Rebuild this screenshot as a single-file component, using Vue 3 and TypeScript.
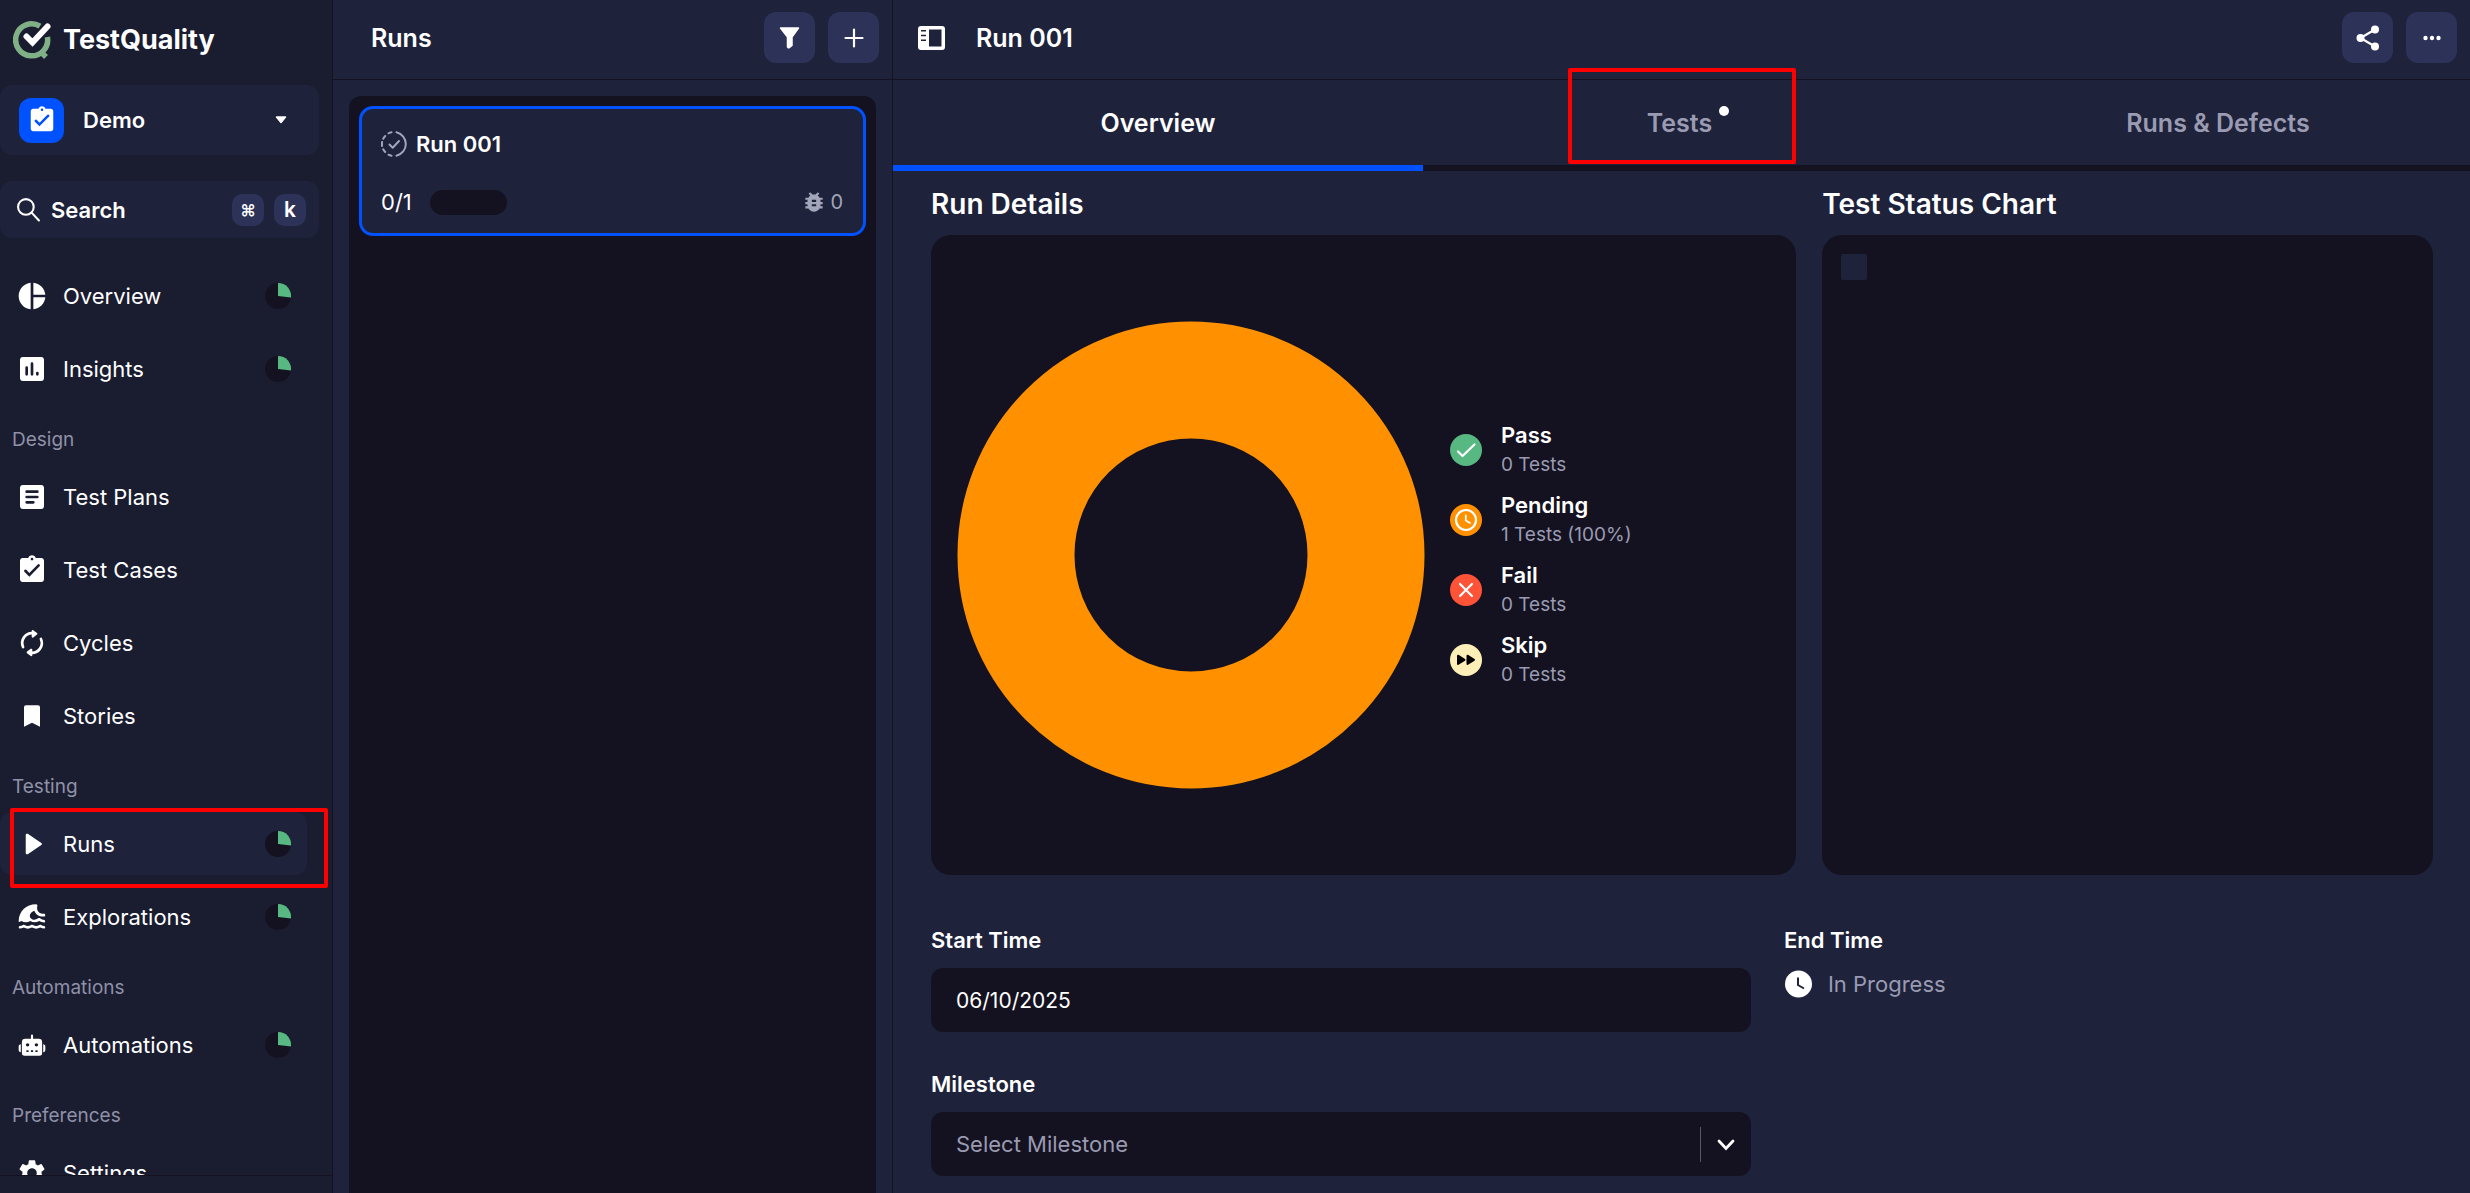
<script setup lang="ts">
import { ref } from 'vue'

interface NavItem {
  label: string
  icon: string
  meter?: boolean
  active?: boolean
}

interface NavGroup {
  title?: string
  items: NavItem[]
}

interface StatusRow {
  key: string
  label: string
  detail: string
}

const groups: NavGroup[] = [
  {
    items: [
      { label: 'Overview', icon: 'pie', meter: true },
      { label: 'Insights', icon: 'chart', meter: true },
    ],
  },
  {
    title: 'Design',
    items: [
      { label: 'Test Plans', icon: 'article' },
      { label: 'Test Cases', icon: 'clipboard' },
      { label: 'Cycles', icon: 'cycle' },
      { label: 'Stories', icon: 'bookmark' },
    ],
  },
  {
    title: 'Testing',
    items: [
      { label: 'Runs', icon: 'play', meter: true, active: true },
      { label: 'Explorations', icon: 'wave', meter: true },
    ],
  },
  {
    title: 'Automations',
    items: [{ label: 'Automations', icon: 'robot', meter: true }],
  },
  {
    title: 'Preferences',
    items: [{ label: 'Settings', icon: 'gear' }],
  },
]

const iconPaths: Record<string, string> = {
  pie: 'M11 2v20c-5.07-.5-9-4.79-9-10s3.93-9.5 9-10zm2.03 0v8.99H22c-.47-4.74-4.24-8.52-8.97-8.99zm0 11.01V22c4.74-.47 8.5-4.25 8.97-8.99h-8.97z',
  chart:
    'M19 3H5c-1.1 0-2 .9-2 2v14c0 1.1.9 2 2 2h14c1.1 0 2-.9 2-2V5c0-1.1-.9-2-2-2zM9 16a1 1 0 0 1-2 0v-5a1 1 0 0 1 2 0v5zm4 0a1 1 0 0 1-2 0V8a1 1 0 0 1 2 0v8zm4 0a1 1 0 0 1-2 0v-1a1 1 0 0 1 2 0v1z',
  article:
    'M19 3H5c-1.1 0-2 .9-2 2v14c0 1.1.9 2 2 2h14c1.1 0 2-.9 2-2V5c0-1.1-.9-2-2-2zm-6 14H8a1 1 0 0 1 0-2h5a1 1 0 0 1 0 2zm3-4H8a1 1 0 0 1 0-2h8a1 1 0 0 1 0 2zm0-4H8a1 1 0 0 1 0-2h8a1 1 0 0 1 0 2z',
  clipboard:
    'M19 3h-4.18C14.4 1.84 13.3 1 12 1c-1.3 0-2.4.84-2.82 2H5c-1.1 0-2 .9-2 2v14c0 1.1.9 2 2 2h14c1.1 0 2-.9 2-2V5c0-1.1-.9-2-2-2zm-7-.2c.55 0 1 .45 1 1s-.45 1-1 1-1-.45-1-1 .45-1 1-1zM10 17l-3.7-3.7a1 1 0 0 1 1.41-1.41L10 14.17l6.3-6.3a1 1 0 0 1 1.41 1.41L10 17z',
  bookmark: 'M7.5 4h9A1.5 1.5 0 0 1 18 5.5V20l-6-3-6 3V5.500A1.500 1.500 0 0 1 7.500 4z',
  play: 'M7.300 5.200c0-.8.8-1.200 1.500-.8l10.200 6.800c.6.4.6 1.200 0 1.600l-10.200 6.800c-.7.4-1.500 0-1.500-.8z',
  wave: 'M2 15.200C2 7.800 7.600 2.500 15 2.500c.8 0 1.200.6 1 1.300-.8 3 .9 5.700 4 5.700h1.200c1 0 1 2.100 0 2.100h-1.700c-2.300 0-4.300-1.300-5.200-3.200-.3-.9-.7-1.100-1.400-.7-3.600 2-3 5.300-.5 6.100 1.300.5 2.800.2 4.200-.8.500-.4 1-.4 1.500 0 1.100.8 2 1.100 3.100 1.200.9.100.9 1.900 0 1.900-1.400 0-2.600-.4-3.800-1.100-2.100 1.200-4.700 1.200-6.700 0-2.100 1.200-4.600 1.200-6.600 0-.6.300-1.100.6-1.700.7-.3.100-.4-.1-.4-.5zM2.800 20.700c-1 0-1-1.900 0-1.900.9 0 1.600-.3 2.400-.8.400-.3.800-.3 1.200 0 1.700 1.100 3.100 1.100 4.900 0 .5-.3.900-.3 1.400 0 1.700 1.100 3.100 1.100 4.900 0 .4-.3.800-.3 1.200 0 .8.500 1.500.8 2.400.8s1 1.900 0 1.900c-1.100 0-2-.3-3-.8-2.100 1.100-4.200 1.100-6.200 0-2.100 1.100-4.200 1.100-6.200 0-1 .5-1.900.8-3 .8z',
  robot:
    'M11.200 5a.8.8 0 0 1 1.600 0v2.400h4.200A2.600 2.600 0 0 1 19.600 10v8a2 2 0 0 1-2 2H6.400a2 2 0 0 1-2-2v-8A2.600 2.600 0 0 1 7 7.400h4.200zM8.700 10.600a1.300 1.300 0 1 0 0 2.600 1.300 1.300 0 0 0 0-2.600zm6.600 0a1.300 1.300 0 1 0 0 2.600 1.300 1.300 0 0 0 0-2.600zM7.800 16v1.300h1.600V16zm3.400 0v1.300h1.600V16zm3.400 0v1.300h1.600V16zM3.600 11.400v6C2.600 17.400 2 16.600 2 15.700v-2.600c0-1 .6-1.700 1.600-1.700zm16.800 0v6c1 0 1.600-.8 1.600-1.700v-2.600c0-1-.6-1.700-1.600-1.700z',
  gear: 'M19.14 12.94c.04-.3.06-.61.06-.94 0-.32-.02-.64-.07-.94l2.030-1.580c.18-.14.23-.41.12-.61l-1.920-3.320c-.12-.22-.37-.29-.59-.22l-2.390.96c-.5-.38-1.030-.7-1.620-.94l-.36-2.540c-.04-.24-.24-.41-.48-.41h-3.840c-.24 0-.43.17-.47.41l-.36 2.540c-.59.24-1.130.57-1.620.94l-2.390-.96c-.22-.08-.47 0-.59.22L2.740 8.870c-.12.21-.08.47.12.61l2.030 1.580c-.05.3-.09.63-.09.94s.02.64.07.94l-2.030 1.580c-.18.14-.23.41-.12.61l1.920 3.320c.12.22.37.29.59.22l2.390-.96c.5.38 1.030.7 1.620.94l.36 2.540c.05.24.24.41.48.41h3.840c.24 0 .44-.17.47-.41l.36-2.540c.59-.24 1.130-.56 1.620-.94l2.390.96c.22.08.47 0 .59-.22l1.920-3.320c.12-.22.07-.47-.12-.61l-2.010-1.580zM12 15.600c-1.980 0-3.600-1.620-3.600-3.600s1.620-3.600 3.600-3.600 3.600 1.620 3.600 3.600-1.620 3.600-3.600 3.600z',
}

const statuses: StatusRow[] = [
  { key: 'pass', label: 'Pass', detail: '0 Tests' },
  { key: 'pending', label: 'Pending', detail: '1 Tests (100%)' },
  { key: 'fail', label: 'Fail', detail: '0 Tests' },
  { key: 'skip', label: 'Skip', detail: '0 Tests' },
]

const startTime = ref('06/10/2025')
const milestone = ref('')
</script>

<template>
  <div class="app">
    <aside class="sidebar">
      <div class="brand">
        <svg class="brand-mark" viewBox="0 0 38 38" aria-hidden="true">
          <path d="M27 5.200A16 16 0 1 0 34.400 16M28 31l5 5" fill="none" stroke="#80b085" stroke-width="5.500" />
          <path d="M13 16.500l6.500 6 15-17" fill="none" stroke="#1a1c30" stroke-width="9" />
          <path d="M13.500 15.500l6 6 15-16" fill="none" stroke="#fff" stroke-width="6" stroke-linecap="round" />
        </svg>
        <span>TestQuality</span>
      </div>

      <button class="project" type="button">
        <span class="project-badge">
          <svg viewBox="0 0 24 24"><path :d="iconPaths.clipboard" fill="#fff" /></svg>
        </span>
        <span class="project-name">Demo</span>
        <svg class="caret" viewBox="0 0 12 8"><path d="M1.500 1h9L6 6.500z" fill="#fff" stroke="#fff" stroke-width="1.500" stroke-linejoin="round" /></svg>
      </button>

      <button class="search" type="button">
        <svg viewBox="0 0 24 24" fill="none" stroke="#fff" stroke-width="2" stroke-linecap="round">
          <circle cx="9.500" cy="9.500" r="7.500" />
          <path d="M15 15l7 7.500" />
        </svg>
        <span class="search-text">Search</span>
        <kbd class="cmd">⌘</kbd>
        <kbd>k</kbd>
      </button>

      <nav class="nav">
        <section v-for="(group, g) in groups" :key="g">
          <h2 v-if="group.title" class="nav-title">{{ group.title }}</h2>
          <div class="nav-list">
            <a
              v-for="item in group.items"
              :key="item.label"
              href="#"
              class="nav-item"
              :class="{ active: item.active }"
            >
              <svg class="nav-icon" viewBox="0 0 24 24" aria-hidden="true">
                <g v-if="item.icon === 'cycle'" fill="none" stroke="#fff" stroke-width="2" stroke-linecap="round" stroke-linejoin="round">
                  <path d="M5.300 15A7.400 7.400 0 0 1 12.500 4.600M18.700 9A7.400 7.400 0 0 1 11.500 19.400" />
                  <path d="M12.500 3l2.800 2.100-2.800 2.100zM11.500 17l-2.800 2 2.800 2.100z" fill="#fff" stroke-width="1.500" />
                </g>
                <path v-else :d="iconPaths[item.icon]" fill="#fff" fill-rule="evenodd" />
              </svg>
              <span class="nav-label">{{ item.label }}</span>
              <svg v-if="item.meter" class="meter" viewBox="0 0 26 26" aria-hidden="true">
                <circle cx="13" cy="13" r="13" fill="#141220" />
                <path d="M13 0a13 13 0 0 1 13 14.500l-13-1.500z" fill="#57b881" />
              </svg>
              <span v-if="item.active" class="callout callout-nav"></span>
            </a>
          </div>
        </section>
      </nav>
      <div class="sidebar-foot"></div>
    </aside>

    <section class="runs">
      <header class="bar runs-bar">
        <h1>Runs</h1>
        <button class="square" type="button" aria-label="Filter">
          <svg viewBox="0 0 24 24"><path d="M2.500 2h18L14 11V19.500L11.500 21.500a1.200 1.200 0 0 1-2-.8V11z" fill="#fff" stroke="#fff" stroke-width="1.500" stroke-linejoin="round" /></svg>
        </button>
        <button class="square" type="button" aria-label="Add">
          <svg viewBox="0 0 24 24"><path d="M12 3.500v17M3.500 12h17" stroke="#fff" stroke-width="2.200" stroke-linecap="round" /></svg>
        </button>
      </header>
      <div class="runs-body">
        <div class="runs-list">
          <article class="run-card">
            <div class="run-head">
              <svg viewBox="0 0 26 26" fill="none" stroke="#a3a5ba" stroke-width="2" stroke-linecap="round" stroke-linejoin="round">
                <path d="M15.500 1.300A12 12 0 0 1 15.500 24.700M10.500 24.700A12 12 0 0 1 7.500 23.700M4.200 21A12 12 0 0 1 2.200 18.300M1.100 15A12 12 0 0 1 1.100 11M2.200 7.700A12 12 0 0 1 4.200 5M7.500 2.300A12 12 0 0 1 10.500 1.300" />
                <path d="M8.500 13.500l3.200 3.200 6.300-6.700" />
              </svg>
              <strong>Run 001</strong>
            </div>
            <div class="run-foot">
              <span class="run-count">0/1</span>
              <span class="run-progress"></span>
              <span class="run-bugs">
                <svg viewBox="0 0 24 24">
                  <path
                    d="M20 8h-2.810c-.45-.78-1.070-1.450-1.820-1.960L17 4.410 15.590 3l-2.170 2.170C12.960 5.060 12.490 5 12 5c-.49 0-.96.06-1.410.17L8.410 3 7 4.410l1.620 1.630C7.880 6.550 7.260 7.220 6.810 8H4v2h2.090c-.05.33-.09.66-.09 1v1H4v2h2v1c0 .34.04.67.09 1H4v2h2.810c1.040 1.790 2.970 3 5.190 3s4.150-1.210 5.190-3H20v-2h-2.090c.05-.33.09-.66.09-1v-1h2v-2h-2v-1c0-.34-.04-.67-.09-1H20V8zm-6 8h-4v-2h4v2zm0-4h-4v-2h4v2z"
                    fill="#a3a5ba"
                  />
                </svg>
                0
              </span>
            </div>
          </article>
        </div>
      </div>
    </section>

    <main class="detail">
      <header class="bar detail-bar">
        <svg class="panel-icon" viewBox="0 0 27 24" aria-hidden="true">
          <path
            d="M3 0h21a3 3 0 0 1 3 3v18a3 3 0 0 1-3 3H3a3 3 0 0 1-3-3V3a3 3 0 0 1 3-3zM11 3.500v17h12.500v-17zM3 4v1.600h5V4zM3 8.700v1.600h5V8.700zM3 13.400V15h5v-1.600z"
            fill="#fff"
            fill-rule="evenodd"
          />
        </svg>
        <h1>Run 001</h1>
        <button class="square" type="button" aria-label="Share">
          <svg class="share" viewBox="0 0 24 26">
            <path d="M4.500 13L19 4.500M4.500 13L19 21.500" stroke="#fff" stroke-width="2.200" />
            <circle cx="4.500" cy="13" r="4" fill="#fff" />
            <circle cx="19" cy="4.500" r="4" fill="#fff" />
            <circle cx="19" cy="21.500" r="4" fill="#fff" />
          </svg>
        </button>
        <button class="square" type="button" aria-label="More">
          <svg viewBox="0 0 24 24" fill="#fff">
            <circle cx="5.500" cy="12" r="2.200" />
            <circle cx="12" cy="12" r="2.200" />
            <circle cx="18.500" cy="12" r="2.200" />
          </svg>
        </button>
      </header>

      <div class="tabs" role="tablist">
        <button class="tab selected" type="button" role="tab" aria-selected="true">Overview</button>
        <button class="tab" type="button" role="tab" aria-selected="false">
          Tests<span class="dot"></span>
          <span class="callout callout-tab"></span>
        </button>
        <button class="tab" type="button" role="tab" aria-selected="false">Runs &amp; Defects</button>
      </div>

      <div class="content">
        <div class="charts">
          <section>
            <h2>Run Details</h2>
            <div class="panel donut-panel">
              <svg class="donut" viewBox="0 0 468 468" role="img" aria-label="Pending 100%">
                <circle cx="234" cy="234" r="175" fill="none" stroke="#ff9100" stroke-width="117" />
              </svg>
              <ul class="legend">
                <li v-for="s in statuses" :key="s.key">
                  <svg viewBox="0 0 32 32" fill="none" stroke="#fff" stroke-width="2.200" stroke-linecap="round" stroke-linejoin="round">
                    <template v-if="s.key === 'pass'">
                      <circle cx="16" cy="16" r="16" fill="#57b881" stroke="none" />
                      <path d="M8 17.500l4.500 4.500L24.500 10.500" />
                    </template>
                    <template v-else-if="s.key === 'pending'">
                      <circle cx="16" cy="16" r="16" fill="#ff9100" stroke="none" />
                      <circle cx="16" cy="16" r="10" />
                      <path d="M15.800 11.500v5l4.200 2.500" stroke-width="1.800" />
                    </template>
                    <template v-else-if="s.key === 'fail'">
                      <circle cx="16" cy="16" r="16" fill="#ff5338" stroke="none" />
                      <path d="M10 10l12 12M22 10L10 22" />
                    </template>
                    <template v-else>
                      <circle cx="16" cy="16" r="16" fill="#feefb9" stroke="none" />
                      <path d="M8 11.700v8.200l6.500-4.100zM17.500 11.700v8.200l6.500-4.100z" fill="#000" stroke="#000" stroke-width="2" />
                    </template>
                  </svg>
                  <div>
                    <strong>{{ s.label }}</strong>
                    <span>{{ s.detail }}</span>
                  </div>
                </li>
              </ul>
            </div>
          </section>
          <section>
            <h2>Test Status Chart</h2>
            <div class="panel status-panel"><span class="swatch"></span></div>
          </section>
        </div>

        <div class="form">
          <div class="field">
            <label for="start-time">Start Time</label>
            <input id="start-time" v-model="startTime" type="text" />
          </div>
          <div class="field">
            <span class="field-label">End Time</span>
            <div class="in-progress">
              <svg viewBox="0 0 28 28">
                <circle cx="14.500" cy="14" r="13.500" fill="#fff" />
                <path d="M14 7.500v7.500l6 3.500" fill="none" stroke="#1e223b" stroke-width="2" />
              </svg>
              <span>In Progress</span>
            </div>
          </div>
          <div class="field">
            <label for="milestone">Milestone</label>
            <div class="select">
              <select id="milestone" v-model="milestone">
                <option value="">Select Milestone</option>
              </select>
              <span class="select-arrow">
                <svg viewBox="0 0 18 12"><path d="M2 2l7 7.500L16 2" fill="none" stroke="#fff" stroke-width="2.800" stroke-linecap="round" /></svg>
              </span>
            </div>
          </div>
        </div>
      </div>
    </main>
  </div>
</template>

<style>
body {
  margin: 0;
  background: #1e223b;
}
</style>

<style scoped>
.app {
  display: flex;
  height: 100vh;
  overflow: hidden;
  background: #1e223b;
  color: #fff;
  font-family: Inter, 'Liberation Sans', sans-serif;
  font-size: 22px;
  line-height: 28px;
}

.app *,
.app *::before {
  box-sizing: border-box;
}

h1,
h2,
ul {
  margin: 0;
  padding: 0;
}

svg {
  flex: none;
  display: block;
}

button {
  border: 0;
  color: inherit;
  font: inherit;
  cursor: pointer;
}

/* Sidebar */
.sidebar {
  flex: none;
  display: flex;
  flex-direction: column;
  width: 333px;
  background: #1a1c30;
  border-right: 1px solid #141220;
}

.brand {
  display: flex;
  align-items: center;
  gap: 12px;
  padding: 21px 13px 26px;
  font-size: 27px;
  font-weight: 700;
  line-height: 38px;
}

.brand-mark {
  width: 38px;
  height: 38px;
}

.project,
.search {
  flex: none;
  display: flex;
  align-items: center;
  margin: 0 13px 26px 0;
  border-radius: 12px;
  background: #1e223b;
  font-weight: 600;
  text-align: left;
}

.project {
  height: 70px;
  padding: 0 32px 0 19px;
}

.project-badge {
  display: grid;
  place-items: center;
  width: 45px;
  height: 45px;
  border-radius: 12px;
  background: #0052ff;
}

.project-badge svg {
  width: 30px;
  height: 30px;
}

.project-name {
  flex: 1;
  padding-left: 19px;
}

.caret {
  width: 12px;
  height: 8px;
}

.search {
  height: 57px;
  padding: 0 13px 0 16px;
}

.search svg {
  width: 25px;
  height: 25px;
}

.search-text {
  flex: 1;
  padding-left: 10px;
}

kbd {
  display: grid;
  place-items: center;
  width: 32px;
  height: 32px;
  margin-left: 10px;
  border-radius: 10px;
  background: #2d3258;
  font: inherit;
  font-size: 21px;
}

.cmd {
  font-size: 16px;
}

.nav {
  flex: 1;
  min-height: 0;
  overflow: hidden;
}

.nav-title {
  padding: 28px 12px 13px;
  color: #8f91a8;
  font-size: 19px;
  font-weight: 400;
  line-height: 24px;
}

.nav-list {
  display: flex;
  flex-direction: column;
  gap: 10px;
}

.nav-item {
  position: relative;
  display: flex;
  align-items: center;
  gap: 15px;
  height: 63px;
  margin-right: 25px;
  padding: 0 16px;
  border-radius: 12px;
  color: #fff;
  text-decoration: none;
}

.nav-item.active {
  background: #1e223b;
}

.nav-icon {
  width: 32px;
  height: 32px;
}

.nav-label {
  flex: 1;
}

.meter {
  width: 26px;
  height: 26px;
}

.callout {
  position: absolute;
  border: 4px solid #f00;
  border-radius: 2px;
  pointer-events: none;
}

.callout-nav {
  top: -4px;
  left: 10px;
  width: 318px;
  height: 80px;
}

.sidebar-foot {
  flex: none;
  height: 18px;
  border-top: 1px solid #141220;
}

/* Shared top bars */
.bar {
  flex: none;
  display: flex;
  align-items: center;
  gap: 13px;
  height: 80px;
  padding: 12px 13px 16px;
  border-bottom: 1px solid #141220;
}

.bar h1 {
  flex: 1;
  font-size: 25px;
  font-weight: 600;
  line-height: 32px;
}

.square {
  display: grid;
  place-items: center;
  width: 51px;
  height: 51px;
  padding: 0;
  border-radius: 12px;
  background: #2d3258;
}

.square svg {
  width: 24px;
  height: 24px;
}

/* Runs column */
.runs {
  flex: none;
  display: flex;
  flex-direction: column;
  width: 560px;
  border-right: 1px solid #141220;
}

.runs-bar {
  padding-left: 38px;
}

.runs-body {
  flex: 1;
  display: flex;
  min-height: 0;
  padding: 16px 16px 0;
}

.runs-list {
  flex: 1;
  padding: 10px 10px 0;
  border-radius: 12px 12px 0 0;
  background: #141220;
}

.run-card {
  padding: 20px 20px 18px 19px;
  border: 3px solid #0052ff;
  border-radius: 14px;
  background: #1e223b;
}

.run-head {
  display: flex;
  align-items: center;
  gap: 9px;
  height: 30px;
}

.run-head strong {
  font-weight: 600;
}

.run-head svg {
  width: 26px;
  height: 26px;
}

.run-foot {
  display: flex;
  align-items: center;
  gap: 18px;
  height: 26px;
  margin-top: 30px;
}

.run-progress {
  width: 77px;
  height: 25px;
  border-radius: 13px;
  background: #141220;
}

.run-bugs {
  display: flex;
  align-items: center;
  gap: 3px;
  margin-left: auto;
  color: #a3a5ba;
  font-size: 20px;
}

.run-bugs svg {
  width: 26px;
  height: 26px;
}

/* Detail */
.detail {
  flex: 1;
  display: flex;
  flex-direction: column;
  min-width: 0;
}

.detail-bar {
  padding-left: 25px;
}

.panel-icon {
  width: 27px;
  height: 24px;
  margin-right: 18px;
}

.detail-bar .share {
  width: 24px;
  height: 26px;
}

.tabs {
  flex: none;
  display: flex;
}

/* The three tabs run slightly past the right edge and are clipped by the page. */
.tab {
  position: relative;
  flex: none;
  display: flex;
  align-items: center;
  justify-content: center;
  width: calc((100% + 13px) / 3);
  height: 91px;
  padding: 0;
  border-bottom: 6px solid #141220;
  background: none;
  color: #9a9bb2;
  font-size: 25px;
  font-weight: 600;
  line-height: 32px;
}

.tab.selected {
  border-color: #0052ff;
  color: #fff;
}

.dot {
  width: 10px;
  height: 10px;
  margin: 0 0 24px 7px;
  border-radius: 50%;
  background: #fff;
}

.callout-tab {
  top: -12px;
  left: calc(50% - 120px);
  width: 228px;
  height: 96px;
}

.content {
  flex: 1;
  min-height: 0;
  overflow: hidden;
  padding: 16px 37px 0 38px;
}

.charts {
  display: grid;
  grid-template-columns: 17fr 12fr;
  gap: 26px;
}

.charts h2 {
  margin-bottom: 14px;
  font-size: 28px;
  font-weight: 600;
  line-height: 34px;
}

.panel {
  display: flex;
  height: 640px;
  border-radius: 20px;
  background: #141220;
}

.donut-panel {
  align-items: center;
  gap: 25px;
  padding: 0 26px;
}

.donut {
  width: 468px;
  height: 468px;
}

.legend {
  list-style: none;
}

.legend li {
  display: flex;
  align-items: center;
  gap: 19px;
  height: 70px;
}

.legend svg {
  width: 32px;
  height: 32px;
}

.legend strong,
.legend span {
  display: block;
  line-height: 30px;
}

.legend strong {
  font-weight: 600;
}

.legend span {
  color: #9a9bb2;
  font-size: 19px;
}

.status-panel {
  padding: 19px;
}

.swatch {
  width: 26px;
  height: 26px;
  border-radius: 2px;
  background: #1e223b;
}

.form {
  display: grid;
  grid-template-columns: 24fr 19fr;
  gap: 38px 33px;
  margin-top: 51px;
}

.field label,
.field-label {
  display: block;
  margin-bottom: 14px;
  font-weight: 600;
}

.field input,
.field select {
  width: 100%;
  height: 64px;
  padding: 0 25px;
  border: 0;
  border-radius: 12px;
  background: #141220;
  color: #fff;
  font: inherit;
}

.field input {
  font-size: 21px;
}

.select {
  position: relative;
}

.field select {
  appearance: none;
  color: #9a9bb2;
}

.select-arrow {
  position: absolute;
  top: 15px;
  right: 0;
  display: grid;
  place-items: center;
  width: 51px;
  height: 35px;
  border-left: 1px solid #55566a;
  pointer-events: none;
}

.select-arrow svg {
  width: 18px;
  height: 12px;
}

.in-progress {
  display: flex;
  align-items: center;
  gap: 16px;
  height: 32px;
  color: #9a9bb2;
}

.in-progress svg {
  width: 28px;
  height: 28px;
}
</style>
